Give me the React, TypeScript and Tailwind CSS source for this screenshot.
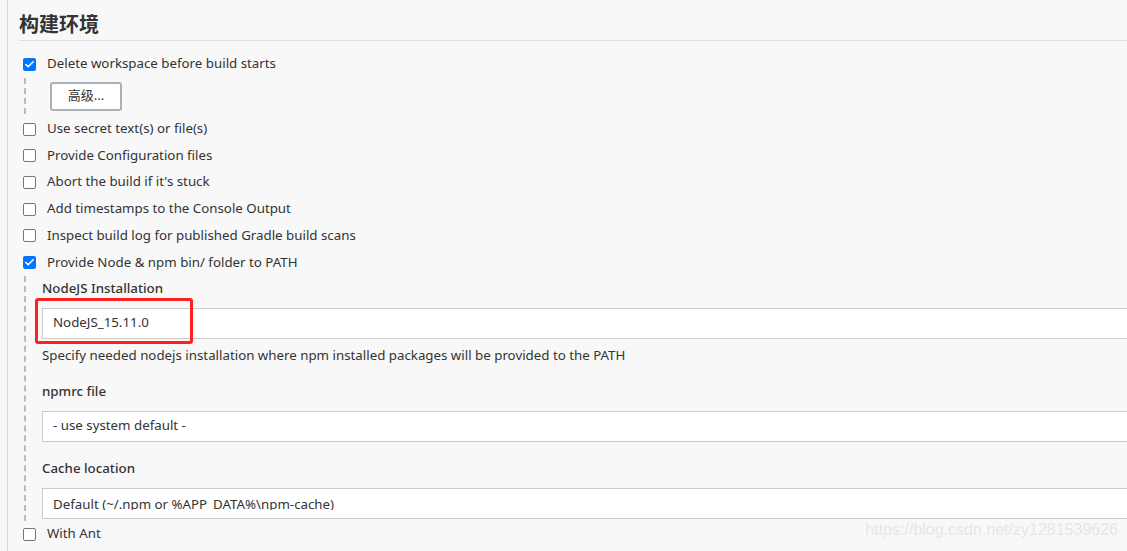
import { Check } from "lucide-react";

const FONT = { fontFamily: '"Noto Sans", "Noto Sans CJK SC", sans-serif' };

function Box({ checked }: { checked?: boolean }) {
  return checked ? (
    <span className="w-[13px] h-[13px] rounded-[2px] bg-[#0075ff] flex items-center justify-center shrink-0">
      <Check size={11} strokeWidth={3.5} className="text-white" />
    </span>
  ) : (
    <span className="w-[13px] h-[13px] rounded-[2px] border border-[#767676] bg-white shrink-0" />
  );
}

function Row({ label, checked }: { label: string; checked?: boolean }) {
  return (
    <div className="flex items-center h-[26.7px] pl-[15px]">
      <Box checked={checked} />
      <span className="ml-[11px] text-[13.3px] text-[#333]">{label}</span>
    </div>
  );
}

function Field({
  label,
  value,
  highlight,
  clipped,
}: {
  label: string;
  value: string;
  highlight?: boolean;
  clipped?: boolean;
}) {
  return (
    <div className="flex flex-col">
      <div className="h-[23px] flex items-center text-[13.3px] font-medium text-[#333]">{label}</div>
      <div className="relative mt-[7px]">
        {clipped ? (
          // the reference shows this value cut just under the baseline
          <div className="h-[31px] bg-white border border-[#ccc] border-r-0 pl-[10px] pt-[6px] text-[13.3px] text-[#333]">
            <div className="h-[15px] leading-[18px] overflow-hidden">{value}</div>
          </div>
        ) : (
          <div className="h-[31px] bg-white border border-[#ccc] border-r-0 flex items-center pl-[10px] text-[13.3px] text-[#333]">
            {value}
          </div>
        )}
        {highlight && (
          <div className="absolute left-[-7px] top-[-10px] w-[158px] h-[46px] border-[3px] border-[#ff2020] rounded-[3px]" />
        )}
      </div>
    </div>
  );
}

export default function App() {
  return (
    <div className="w-[1127px] h-[551px] overflow-hidden bg-[#f8f8f8]" style={FONT}>
      <div className="relative h-full ml-[7px] border-l border-[#d6d6d6] pl-[11px]">
        <h2 className="text-[20px] font-bold text-[#333] h-[41px] pt-[12px] leading-[26px] border-b border-[#ddd]">
          构建环境
        </h2>
        <div className="pt-[10px] -ml-[11px]">
          <Row label="Delete workspace before build starts" checked />
          <div className="ml-[16px] border-l-2 border-dashed border-[#bbb] pl-[24px] pt-[4px] pb-[3px] mb-[2px]">
            <button className="w-[72px] h-[29px] rounded-[3px] border-2 border-[#a9b1b8] bg-white text-[13px] text-[#333]">
              高级...
            </button>
          </div>
          <Row label="Use secret text(s) or file(s)" />
          <Row label="Provide Configuration files" />
          <Row label="Abort the build if it's stuck" />
          <Row label="Add timestamps to the Console Output" />
          <Row label="Inspect build log for published Gradle build scans" />
          <Row label="Provide Node & npm bin/ folder to PATH" checked />
          <div className="ml-[16px] border-l-2 border-dashed border-[#bbb] pl-[16px] pt-[2px] h-[245px] overflow-hidden">
            <Field label="NodeJS Installation" value="NodeJS_15.11.0" highlight />
            <div className="text-[13.3px] text-[#333] h-[18px] mt-[7px] leading-[18px]">
              Specify needed nodejs installation where npm installed packages will be provided to the PATH
            </div>
            <div className="mt-[17px]">
              <Field label="npmrc file" value="- use system default -" />
            </div>
            <div className="mt-[16px]">
              <Field label="Cache location" value="Default (~/.npm or %APP_DATA%\npm-cache)" clipped />
            </div>
          </div>
          <Row label="With Ant" />
        </div>
        <div
          className="absolute right-[9px] bottom-[9px] text-[16px] text-[#e6e6e6]"
          style={{ fontFamily: '"Liberation Sans", sans-serif' }}
        >
          https://blog.csdn.net/zy1281539626
        </div>
      </div>
    </div>
  );
}
